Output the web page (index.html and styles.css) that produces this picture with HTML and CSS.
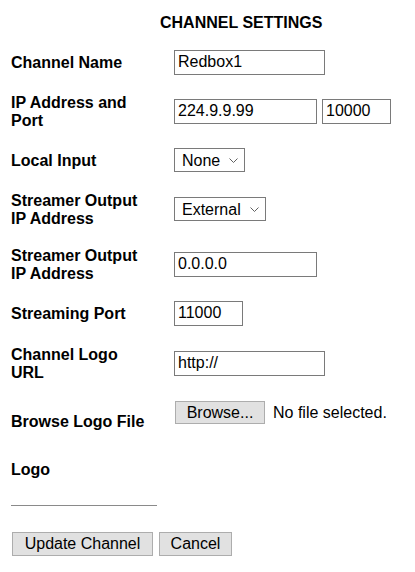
FILE: index.html
```html
<!DOCTYPE html>
<html>
<head>
<meta charset="utf-8">
<link rel="stylesheet" href="styles.css">
</head>
<body>
<div class="page">
  <h1 class="title">CHANNEL SETTINGS</h1>
  <form class="settings">
    <label class="lbl">Channel Name</label>
    <div class="ctrl"><input class="field w151" type="text" value="Redbox1"></div>

    <label class="lbl">IP Address and<br>Port</label>
    <div class="ctrl pair"><input class="field w143" type="text" value="224.9.9.99"><input class="field w69" type="text" value="10000"></div>

    <label class="lbl">Local Input</label>
    <div class="ctrl"><select class="sel w71"><option>None</option></select></div>

    <label class="lbl">Streamer Output<br>IP Address</label>
    <div class="ctrl"><select class="sel w92"><option>External</option></select></div>

    <label class="lbl">Streamer Output<br>IP Address</label>
    <div class="ctrl"><input class="field w143" type="text" value="0.0.0.0"></div>

    <label class="lbl">Streaming Port</label>
    <div class="ctrl"><input class="field w69" type="text" value="11000"></div>

    <label class="lbl">Channel Logo<br>URL</label>
    <div class="ctrl"><input class="field w151" type="text" value="http://"></div>

    <label class="lbl lbl-low">Browse Logo File</label>
    <div class="ctrl ctrl-top file"><button type="button" class="btn browse">Browse...</button><span class="nofile">No file selected.</span></div>
  </form>
  <div class="logo-lbl">Logo</div>
  <div class="rule"></div>
  <div class="actions">
    <button type="button" class="btn update">Update Channel</button>
    <button type="button" class="btn cancel">Cancel</button>
  </div>
</div>
</body>
</html>
```
FILE: styles.css
```css
* { box-sizing: border-box; }
html, body { margin: 0; padding: 0; background: #fff; }
body { font-family: "Liberation Sans", Arial, sans-serif; color: #000; }
.page { padding: 14px 0 0 11px; }
.title {
  margin: 0 0 6px 149px;
  font-size: 16px;
  line-height: 18px;
  font-weight: bold;
}
.settings {
  display: grid;
  grid-template-columns: 163px auto;
  grid-template-rows: 48px 50px 48px 50px 60px 38px 62px 38px;
  align-items: center;
}
.lbl {
  padding-top: 2px;
  font-size: 16px;
  line-height: 18px;
  font-weight: bold;
}
.lbl-low { align-self: end; margin-bottom: 1px; }
.ctrl { display: flex; align-items: center; }
.ctrl-top { align-self: start; margin-top: 7px; }
.pair { gap: 5px; }
.field {
  height: 25px;
  margin: 0;
  padding: 0 3px;
  border: 1px solid #7a7a7a;
  border-radius: 0;
  font-family: "Liberation Sans", Arial, sans-serif;
  font-size: 16px;
  color: #000;
  background: #fff;
  outline: none;
}
.w151 { width: 151px; }
.w143 { width: 143px; }
.w69 { width: 69px; }
.w71 { width: 71px; }
.w92 { width: 92px; }
.sel {
  -webkit-appearance: none;
  appearance: none;
  height: 24px;
  margin: 0;
  padding: 0 0 0 7px;
  border: 1px solid #7a7a7a;
  border-radius: 0;
  font-family: "Liberation Sans", Arial, sans-serif;
  font-size: 16px;
  color: #000;
  background: #fff url("data:image/svg+xml;utf8,<svg xmlns='http://www.w3.org/2000/svg' width='9' height='5' viewBox='0 0 9 5'><path d='M0.5 0.5 L4.5 4.5 L8.5 0.5' fill='none' stroke='%23606060' stroke-width='1'/></svg>") no-repeat right 6px center;
}
.btn {
  margin: 0;
  padding: 0;
  border: 1px solid #adadad;
  border-radius: 0;
  background: #e1e1e1;
  font-family: "Liberation Sans", Arial, sans-serif;
  font-size: 16px;
  color: #000;
}
.file { gap: 8px; }
.browse { width: 90px; height: 23px; margin-left: 1px; }
.nofile { font-size: 16px; line-height: 18px; white-space: nowrap; }
.logo-lbl {
  margin-top: 29px;
  font-size: 16px;
  line-height: 18px;
  font-weight: bold;
}
.rule {
  width: 146px;
  height: 1px;
  margin-top: 26px;
  background: #8a8a8a;
}
.actions {
  display: flex;
  gap: 6px;
  margin-top: 26px;
  padding-left: 1px;
}
.update { width: 141px; height: 24px; }
.cancel { width: 73px; height: 24px; }
```
